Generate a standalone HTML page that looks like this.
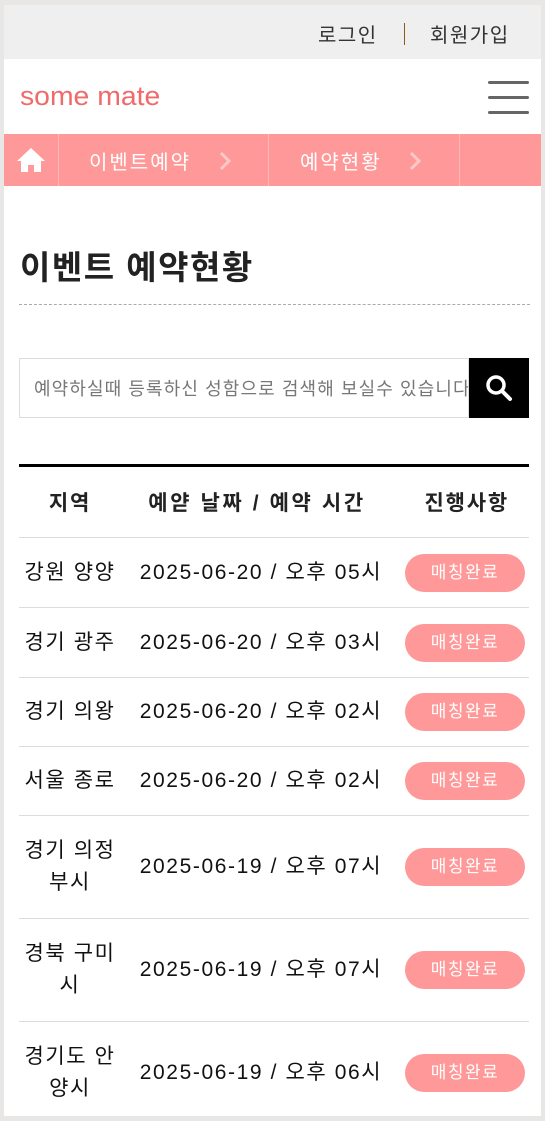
<!DOCTYPE html>
<html><head><meta charset="utf-8"><style>
*{margin:0;padding:0;box-sizing:border-box}
body{width:545px;height:1121px;background:#e9e6e6;font-family:"Liberation Sans","Noto Sans CJK KR",sans-serif;overflow:hidden;position:relative}
.page{position:absolute;left:4px;top:5px;width:537px;height:1111px;background:#fff;overflow:hidden}
.top{height:54px;background:#f0efef;font-size:20px;color:#333;position:relative;letter-spacing:1.5px}
.top span{position:absolute;top:14px}
.hdr{height:75px;position:relative}
.logo{position:absolute;left:16px;top:22px;font-size:27px;color:#f06a6a;letter-spacing:0px;font-weight:300;transform:scaleX(1.05);transform-origin:left}
.ham{position:absolute;right:12px;width:41px;height:3px;background:#666;border-radius:2px}
.nav{height:52px;background:#ff9898;position:relative;color:#fff;font-size:20px;letter-spacing:2px}
.nav .sep{position:absolute;top:0;width:1px;height:52px;background:#ffb8b8}
.nav .t{position:absolute;top:12px}
h1{position:absolute;left:16px;top:236px;font-size:33px;font-weight:bold;color:#222;letter-spacing:1.5px}
.dash{position:absolute;left:15px;right:11px;top:299px;border-top:1px dashed #aaa}
.search{position:absolute;left:15px;top:353px;width:450px;height:60px;border:1px solid #ddd;font-size:18px;color:#777;padding:16px 14px;white-space:nowrap;overflow:hidden;letter-spacing:1.1px}
.sbtn{position:absolute;left:465px;top:353px;width:60px;height:60px;background:#000}
table{position:absolute;left:15px;top:459px;width:510px;border-collapse:collapse;border-top:3px solid #000}
th{height:72px;font-size:21px;font-weight:bold;color:#222;border-bottom:1px solid #ddd;letter-spacing:1.8px}
td{font-size:21px;color:#111;text-align:center;border-bottom:1px solid #ddd;line-height:32px;letter-spacing:1.6px}
td:last-child{text-align:right;padding-right:4px}
.b{display:inline-block;background:#ff9898;color:#fff;font-size:17px;border-radius:19px;width:120px;height:38px;line-height:38px;text-align:center;letter-spacing:1.5px}
</style></head><body><div class="page">
<div class="top"><span style="left:314px">로그인</span><span style="left:400px;top:18px;width:1px;height:22px;background:#8a5a20"></span><span style="left:426px">회원가입</span></div>
<div class="hdr"><div class="logo">some mate</div>
<div class="ham" style="top:22px"></div><div class="ham" style="top:37px"></div><div class="ham" style="top:52px"></div></div>
<div class="nav">
<svg style="position:absolute;left:12px;top:13px" width="30" height="26" viewBox="0 0 30 26"><path d="M15 1L1 14h4v11h7v-7h6v7h7V14h4z" fill="#fff"/></svg>
<div class="sep" style="left:54px"></div><div class="sep" style="left:264px"></div><div class="sep" style="left:455px"></div>
<span class="t" style="left:85px">이벤트예약</span>
<svg style="position:absolute;left:214px;top:17px" width="14" height="20" viewBox="0 0 14 20"><path d="M3 2l8 8-8 8" stroke="#ffc8c8" stroke-width="3" fill="none"/></svg>
<span class="t" style="left:296px">예약현황</span>
<svg style="position:absolute;left:404px;top:17px" width="14" height="20" viewBox="0 0 14 20"><path d="M3 2l8 8-8 8" stroke="#ffc8c8" stroke-width="3" fill="none"/></svg>
</div>
<h1>이벤트 예약현황</h1>
<div class="dash"></div>
<div class="search">예약하실때 등록하신 성함으로 검색해 보실수 있습니다</div>
<div class="sbtn"><svg width="60" height="60" viewBox="0 0 60 60"><circle cx="27" cy="27" r="8" stroke="#fff" stroke-width="3.5" fill="none"/><path d="M33 33l8 8" stroke="#fff" stroke-width="4" stroke-linecap="round"/></svg></div>
<table>
<tr><th style="width:102px">지역</th><th style="width:264px;letter-spacing:2.6px;padding-left:8px">예얃 날짜 / 예약 시간</th><th style="text-align:right;padding-right:20px">진행사항</th></tr>
<tr style="height:70px"><td>강원 양양</td><td style="padding-left:16px">2025-06-20 / 오후 05시</td><td><span class="b">매칭완료</span></td></tr>
<tr style="height:70px"><td>경기 광주</td><td style="padding-left:16px">2025-06-20 / 오후 03시</td><td><span class="b">매칭완료</span></td></tr>
<tr style="height:69px"><td>경기 의왕</td><td style="padding-left:16px">2025-06-20 / 오후 02시</td><td><span class="b">매칭완료</span></td></tr>
<tr style="height:69px"><td>서울 종로</td><td style="padding-left:16px">2025-06-20 / 오후 02시</td><td><span class="b">매칭완료</span></td></tr>
<tr style="height:103px"><td>경기 의정<br>부시</td><td style="padding-left:16px">2025-06-19 / 오후 07시</td><td><span class="b">매칭완료</span></td></tr>
<tr style="height:103px"><td>경북 구미<br>시</td><td style="padding-left:16px">2025-06-19 / 오후 07시</td><td><span class="b">매칭완료</span></td></tr>
<tr style="height:103px"><td>경기도 안<br>양시</td><td style="padding-left:16px">2025-06-19 / 오후 06시</td><td><span class="b">매칭완료</span></td></tr>
</table>
</div></body></html>
